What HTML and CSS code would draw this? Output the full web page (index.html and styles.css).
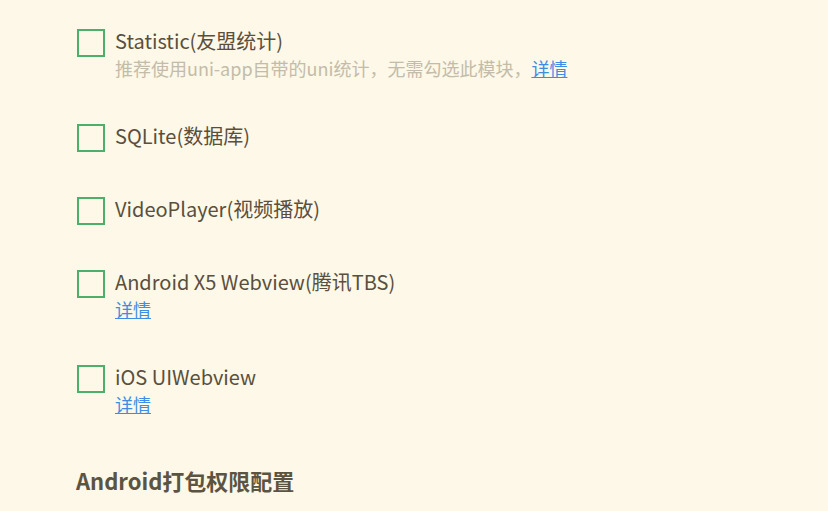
FILE: index.html
```html
<!DOCTYPE html>
<html lang="zh-CN">
<head>
  <meta charset="utf-8">
  <title>模块配置</title>
  <link rel="stylesheet" href="styles.css">
</head>
<body>
  <div class="container">
    <ul class="module-list">
      <li class="module">
        <span class="checkbox"></span>
        <div class="module-body">
          <p class="module-name">Statistic(友盟统计)</p>
          <p class="module-desc">推荐使用uni-app自带的uni统计，无需勾选此模块，<a href="#" class="detail">详情</a></p>
        </div>
      </li>
      <li class="module">
        <span class="checkbox"></span>
        <div class="module-body">
          <p class="module-name">SQLite(数据库)</p>
        </div>
      </li>
      <li class="module">
        <span class="checkbox"></span>
        <div class="module-body">
          <p class="module-name">VideoPlayer(视频播放)</p>
        </div>
      </li>
      <li class="module">
        <span class="checkbox"></span>
        <div class="module-body">
          <p class="module-name">Android X5 Webview(腾讯TBS)</p>
          <p class="module-desc"><a href="#" class="detail">详情</a></p>
        </div>
      </li>
      <li class="module">
        <span class="checkbox"></span>
        <div class="module-body">
          <p class="module-name">iOS UIWebview</p>
          <p class="module-desc"><a href="#" class="detail">详情</a></p>
        </div>
      </li>
    </ul>
    <h2 class="section-title">Android打包权限配置</h2>
  </div>
</body>
</html>
```

FILE: styles.css
```css
body {
  margin: 0;
  background: #fdf8e7;
  font-family: "Noto Sans CJK SC", "Noto Sans", sans-serif;
  color: #5a4f3d;
}

.container {
  padding: 29px 0 0 77px;
}

.module-list {
  list-style: none;
  margin: 0;
  padding: 0;
}

.module {
  display: flex;
  gap: 10px;
  margin-bottom: 45px;
}

.checkbox {
  box-sizing: border-box;
  flex: none;
  width: 28px;
  height: 28px;
  border: 2px solid #4caf6a;
  background: #fdf8e7;
}

.module-name {
  margin: -2px 0 2px;
  font-size: 20px;
  line-height: 28px;
}

.module-desc {
  margin: 0;
  font-size: 18px;
  line-height: 22px;
  color: #c3bcaa;
}

.detail {
  color: #3c8de3;
  text-decoration: underline;
}

.section-title {
  margin: 50px 0 0 -1px;
  font-size: 22px;
  line-height: 30px;
  font-weight: bold;
  color: #5c5442;
}
```
